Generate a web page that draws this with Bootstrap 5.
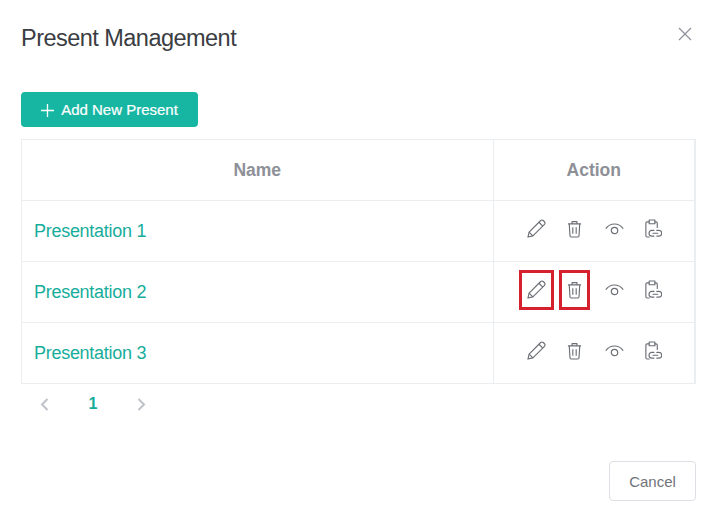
<!DOCTYPE html>
<html lang="en">
<head>
<meta charset="utf-8">
<title>Present Management</title>
<link href="https://cdn.jsdelivr.net/npm/bootstrap@5.3.0/dist/css/bootstrap.min.css" rel="stylesheet">
<style>
html,body{height:100%;margin:0;background:#fff;overflow:hidden}
body{font-family:"Liberation Sans",Arial,sans-serif;color:#33373d}
.pm-shell{padding:0 25px 0 21px;height:524px;display:flex;flex-direction:column}
.pm-head{height:92px;padding-top:22px;align-items:flex-start}
.pm-title{font-size:23.5px;letter-spacing:-.53px;line-height:32px;font-weight:400;color:#3a3d42;margin:0}
.pm-close{background:none;border:0;padding:0;width:14px;height:14px;margin-top:5px;margin-right:4px;line-height:0;color:#8e9098}
.pm-add{background:#17b6a3;border:0;color:#fff;font-size:15px;font-weight:400;height:35px;width:177px;padding:1px 0 0;border-radius:4px;gap:7px;-webkit-text-stroke:.2px #fff}
.pm-add:hover{background:#17b6a3;color:#fff}
.pm-tablewrap{margin-top:12px;border:1px solid #ebeef1;border-right-width:2px}
.pm-table{margin:0;table-layout:fixed;width:100%}
.pm-table th,.pm-table td{height:61px;padding:0;vertical-align:middle;border-bottom:1px solid #ebeef1;background:#fff;box-shadow:none}
.pm-table th{height:60px}
.pm-table tr:last-child td{border-bottom:0}
.pm-table th{font-size:17.5px;font-weight:700;color:#8e9098;text-align:center}
.pm-table th:first-child,.pm-table td:first-child{border-right:1px solid #ebeef1}
.pm-table th:first-child{width:471px}
.pm-link{display:inline-block;color:#17ad9b;font-size:18px;letter-spacing:-.28px;text-decoration:none;padding:2px 0 0 12px}
.pm-actions{padding-left:25px;padding-bottom:4px;align-items:center}
.pm-ico{display:block;color:#6b6e74;flex:none}
.pm-slot{height:40px;display:flex;align-items:center;justify-content:center;flex:none}
.pm-slot-edit{width:35px}
.pm-slot-trash{width:31px;margin-left:5px}
.pm-slot-eye{width:34px;margin-left:7.500px}
.pm-slot-clip{width:34px;margin-left:4.500px}
.pm-mark{outline:3px solid #d5202e;outline-offset:-3px}
.pm-pager{height:38px;margin-top:1px;padding-left:11.500px;align-items:center}
.pm-pg{width:24px;text-align:center;line-height:0}
.pm-cur{color:#17ad9b;font-weight:700;font-size:16px;line-height:20px;margin:0 32px}
.pm-foot{margin-top:38px;justify-content:flex-end}
.pm-cancel{width:87px;height:40px;padding:2px 0 0;border:1px solid #dcdfe3;border-radius:4px;color:#70747a;font-size:15px;background:#fff}
</style>
</head>
<body>
<div class="pm-shell">
  <div class="pm-head d-flex justify-content-between">
    <h1 class="pm-title">Present Management</h1>
    <button class="pm-close" aria-label="Close"><svg width="14" height="14" viewBox="0 0 14 14" fill="none" stroke="currentColor" stroke-width="1.2"><path d="M1 1l12 12M13 1L1 13"/></svg></button>
  </div>
  <div>
    <button class="btn pm-add d-inline-flex align-items-center justify-content-center"><svg width="13" height="13" viewBox="0 0 13 13" fill="none" stroke="#fff" stroke-width="1.3"><path d="M6.500 0v13M0 6.500h13"/></svg>Add New Present</button>
  </div>
  <div class="pm-tablewrap">
    <table class="table pm-table">
      <thead><tr><th>Name</th><th>Action</th></tr></thead>
      <tbody>
        <tr><td><a class="pm-link" href="#">Presentation 1</a></td><td>
          <div class="pm-actions d-flex">
            <span class="pm-slot pm-slot-edit"><svg class="pm-ico" width="19" height="19" viewBox="0 0 20 20" fill="none" stroke="currentColor" stroke-width="1.2" stroke-linejoin="round"><path d="M1 19l1.2-5.2L14.4 1.600a1.900 1.900 0 0 1 2.700 0l1.300 1.300a1.900 1.900 0 0 1 0 2.700L6.200 17.800z"/><path d="M12.600 3.400l4 4M2.200 13.800l4 4"/></svg></span>
            <span class="pm-slot pm-slot-trash"><svg class="pm-ico" width="15" height="18" viewBox="0 0 16 19" fill="none" stroke="currentColor" stroke-width="1.2" stroke-linejoin="round"><path d="M1 4h14M5.400 4V1.600h5.200V4M2.400 4l.8 13a1.200 1.200 0 0 0 1.200 1h7.200a1.200 1.200 0 0 0 1.200-1l.8-13M6.200 7.500v7M9.800 7.500v7"/></svg></span>
            <span class="pm-slot pm-slot-eye"><svg class="pm-ico" width="19" height="12" viewBox="0 0 19 12" fill="none" stroke="currentColor" stroke-width="1.2"><path d="M.8 5.600C3 2.600 6 1 9.500 1s6.500 1.600 8.700 4.600"/><circle cx="9.500" cy="7.500" r="3.200"/></svg></span>
            <span class="pm-slot pm-slot-clip"><svg class="pm-ico" width="18" height="19" viewBox="0 0 18 20" fill="none" stroke="currentColor" stroke-width="1.2" stroke-linecap="round" stroke-linejoin="round"><path d="M5 3H2.800A1.300 1.300 0 0 0 1.500 4.300v13.400A1.300 1.300 0 0 0 2.800 19H5M11 3h1.200a1.300 1.300 0 0 1 1.300 1.300V9"/><path d="M5 1h6v4H5z"/><path d="M10 12h-2.200a3 3 0 0 0 0 6H10M13 12h2.200a3 3 0 0 1 0 6H13M9 15h5"/></svg></span>
          </div></td></tr>
        <tr><td><a class="pm-link" href="#">Presentation 2</a></td><td>
          <div class="pm-actions d-flex">
            <span class="pm-slot pm-slot-edit pm-mark"><svg class="pm-ico" width="19" height="19" viewBox="0 0 20 20" fill="none" stroke="currentColor" stroke-width="1.2" stroke-linejoin="round"><path d="M1 19l1.2-5.2L14.4 1.600a1.900 1.900 0 0 1 2.700 0l1.300 1.300a1.900 1.900 0 0 1 0 2.700L6.200 17.800z"/><path d="M12.600 3.400l4 4M2.200 13.800l4 4"/></svg></span>
            <span class="pm-slot pm-slot-trash pm-mark"><svg class="pm-ico" width="15" height="18" viewBox="0 0 16 19" fill="none" stroke="currentColor" stroke-width="1.2" stroke-linejoin="round"><path d="M1 4h14M5.400 4V1.600h5.200V4M2.400 4l.8 13a1.200 1.200 0 0 0 1.200 1h7.200a1.200 1.200 0 0 0 1.200-1l.8-13M6.200 7.500v7M9.800 7.500v7"/></svg></span>
            <span class="pm-slot pm-slot-eye"><svg class="pm-ico" width="19" height="12" viewBox="0 0 19 12" fill="none" stroke="currentColor" stroke-width="1.2"><path d="M.8 5.600C3 2.600 6 1 9.500 1s6.500 1.600 8.700 4.600"/><circle cx="9.500" cy="7.500" r="3.200"/></svg></span>
            <span class="pm-slot pm-slot-clip"><svg class="pm-ico" width="18" height="19" viewBox="0 0 18 20" fill="none" stroke="currentColor" stroke-width="1.2" stroke-linecap="round" stroke-linejoin="round"><path d="M5 3H2.800A1.300 1.300 0 0 0 1.500 4.300v13.400A1.300 1.300 0 0 0 2.800 19H5M11 3h1.200a1.300 1.300 0 0 1 1.300 1.300V9"/><path d="M5 1h6v4H5z"/><path d="M10 12h-2.200a3 3 0 0 0 0 6H10M13 12h2.200a3 3 0 0 1 0 6H13M9 15h5"/></svg></span>
          </div></td></tr>
        <tr><td><a class="pm-link" href="#">Presentation 3</a></td><td>
          <div class="pm-actions d-flex">
            <span class="pm-slot pm-slot-edit"><svg class="pm-ico" width="19" height="19" viewBox="0 0 20 20" fill="none" stroke="currentColor" stroke-width="1.2" stroke-linejoin="round"><path d="M1 19l1.2-5.2L14.4 1.600a1.900 1.900 0 0 1 2.700 0l1.300 1.300a1.900 1.900 0 0 1 0 2.700L6.200 17.800z"/><path d="M12.600 3.400l4 4M2.200 13.800l4 4"/></svg></span>
            <span class="pm-slot pm-slot-trash"><svg class="pm-ico" width="15" height="18" viewBox="0 0 16 19" fill="none" stroke="currentColor" stroke-width="1.2" stroke-linejoin="round"><path d="M1 4h14M5.400 4V1.600h5.200V4M2.400 4l.8 13a1.200 1.200 0 0 0 1.200 1h7.200a1.200 1.200 0 0 0 1.200-1l.8-13M6.200 7.500v7M9.800 7.500v7"/></svg></span>
            <span class="pm-slot pm-slot-eye"><svg class="pm-ico" width="19" height="12" viewBox="0 0 19 12" fill="none" stroke="currentColor" stroke-width="1.2"><path d="M.8 5.600C3 2.600 6 1 9.500 1s6.500 1.600 8.700 4.600"/><circle cx="9.500" cy="7.500" r="3.200"/></svg></span>
            <span class="pm-slot pm-slot-clip"><svg class="pm-ico" width="18" height="19" viewBox="0 0 18 20" fill="none" stroke="currentColor" stroke-width="1.2" stroke-linecap="round" stroke-linejoin="round"><path d="M5 3H2.800A1.300 1.300 0 0 0 1.500 4.300v13.400A1.300 1.300 0 0 0 2.800 19H5M11 3h1.200a1.300 1.300 0 0 1 1.300 1.300V9"/><path d="M5 1h6v4H5z"/><path d="M10 12h-2.200a3 3 0 0 0 0 6H10M13 12h2.200a3 3 0 0 1 0 6H13M9 15h5"/></svg></span>
          </div></td></tr>
      </tbody>
    </table>
  </div>
  <div class="pm-pager d-flex">
    <span class="pm-pg"><svg width="9" height="13" viewBox="0 0 9 13" fill="none" stroke="#bfc2c8" stroke-width="2"><path d="M7.500 1L2 6.500 7.500 12"/></svg></span>
    <span class="pm-cur">1</span>
    <span class="pm-pg"><svg width="9" height="13" viewBox="0 0 9 13" fill="none" stroke="#bfc2c8" stroke-width="2"><path d="M1.500 1L7 6.500 1.500 12"/></svg></span>
  </div>
  <div class="pm-foot d-flex">
    <button class="btn pm-cancel">Cancel</button>
  </div>
</div>
<script src="https://cdn.jsdelivr.net/npm/bootstrap@5.3.0/dist/js/bootstrap.bundle.min.js"></script>
</body>
</html>
